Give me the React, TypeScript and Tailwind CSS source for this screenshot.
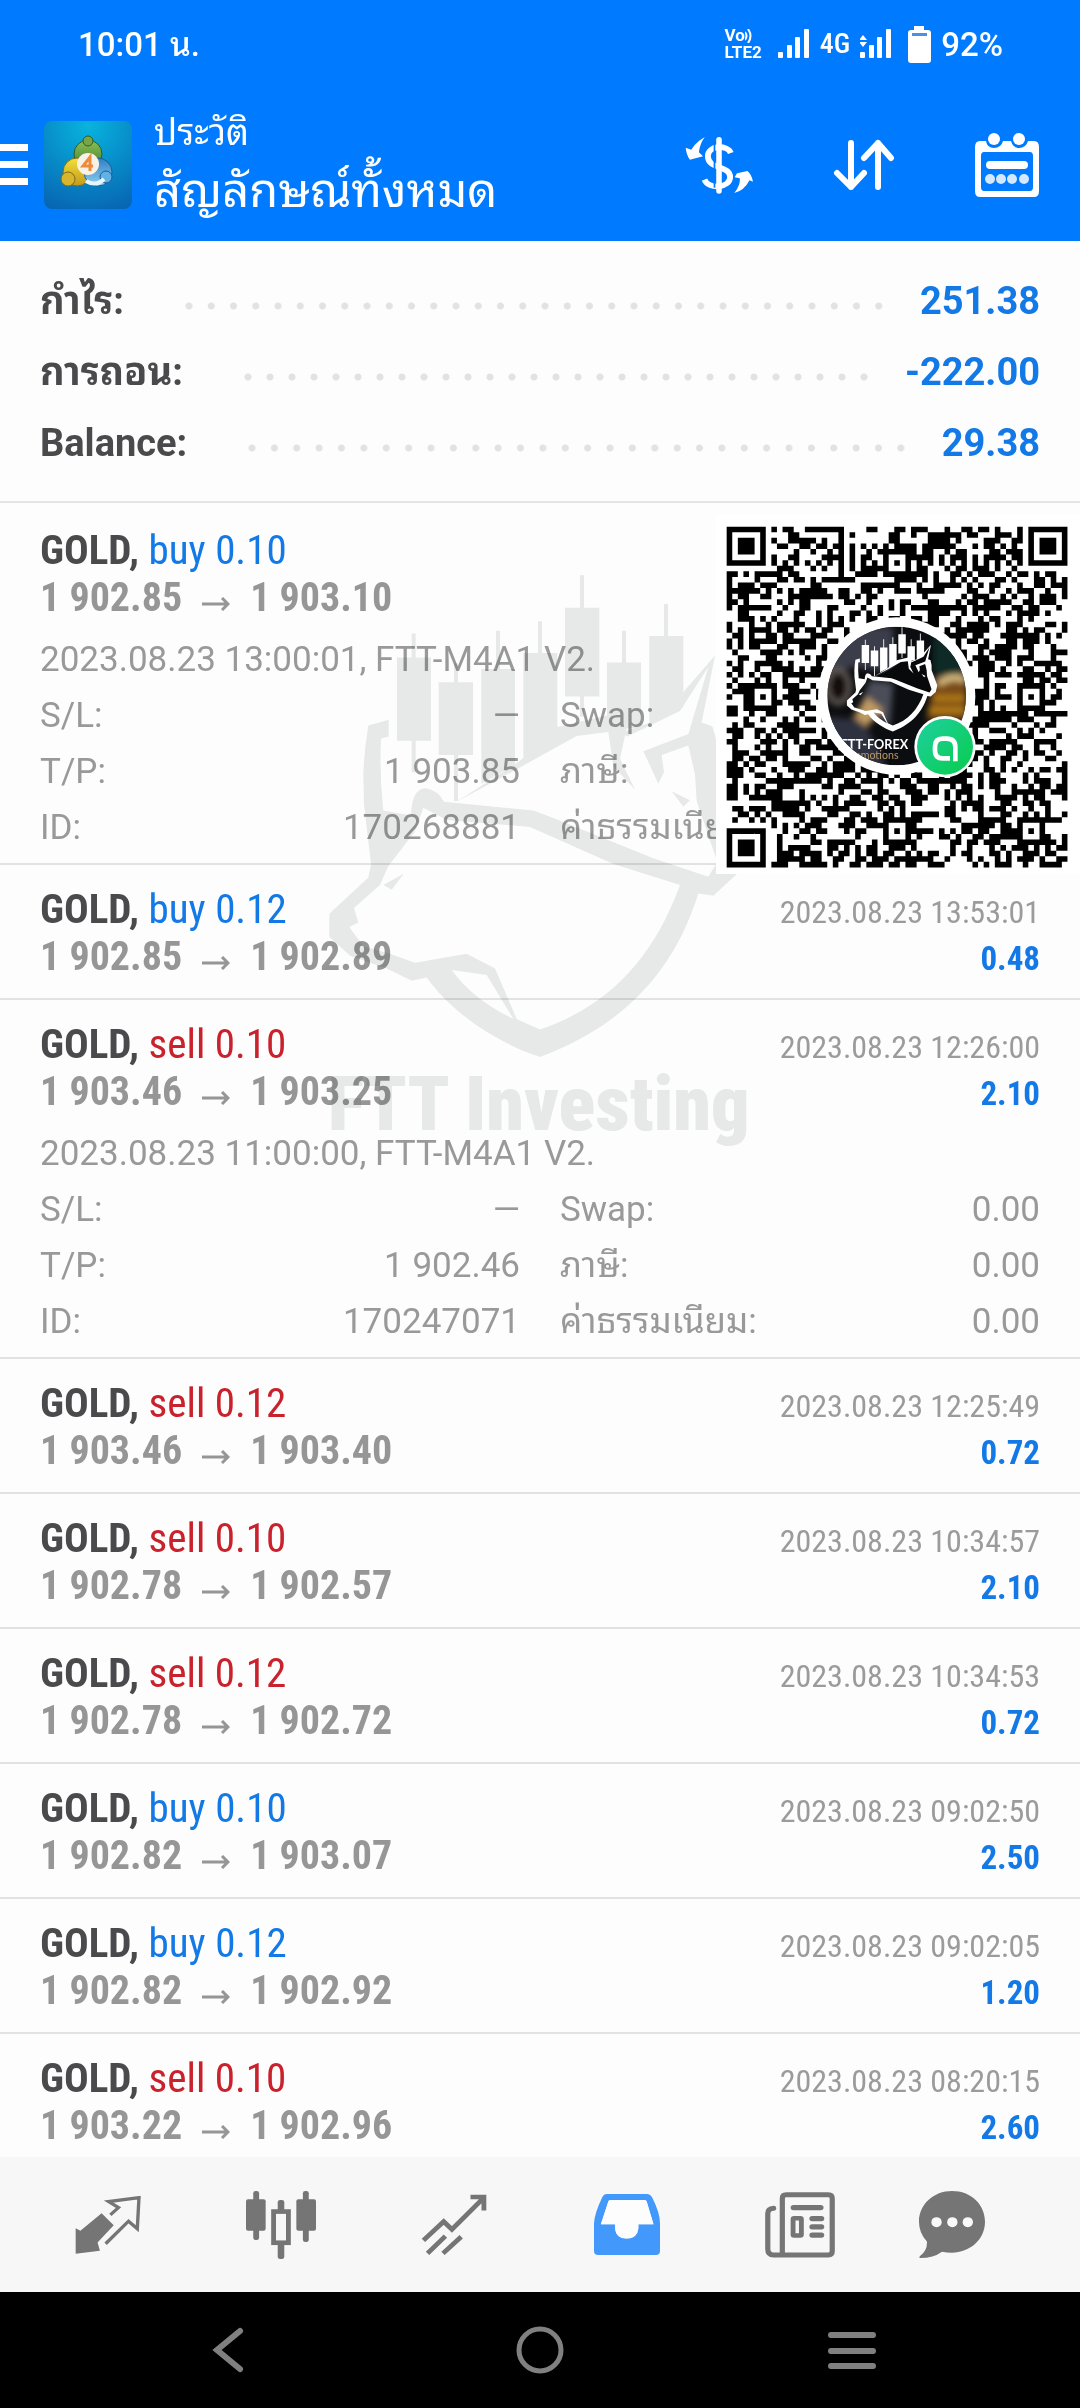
import React from 'react';

type Deal = {
  side: 'buy' | 'sell';
  volume: string;
  open: string;
  close: string;
  closedAt: string;
  profit: string;
  details?: {
    comment: string;
    takeProfit: string;
    id: string;
  };
};

const SUMMARY = [
  { label: 'กำไร:', value: '251.38' },
  { label: 'การถอน:', value: '-222.00' },
  { label: 'Balance:', value: '29.38' },
];

const DEALS: Deal[] = [
  {
    side: 'buy',
    volume: '0.10',
    open: '1 902.85',
    close: '1 903.10',
    closedAt: '',
    profit: '',
    details: { comment: '2023.08.23 13:00:01, FTT-M4A1 V2.', takeProfit: '1 903.85', id: '170268881' },
  },
  { side: 'buy', volume: '0.12', open: '1 902.85', close: '1 902.89', closedAt: '2023.08.23 13:53:01', profit: '0.48' },
  {
    side: 'sell',
    volume: '0.10',
    open: '1 903.46',
    close: '1 903.25',
    closedAt: '2023.08.23 12:26:00',
    profit: '2.10',
    details: { comment: '2023.08.23 11:00:00, FTT-M4A1 V2.', takeProfit: '1 902.46', id: '170247071' },
  },
  { side: 'sell', volume: '0.12', open: '1 903.46', close: '1 903.40', closedAt: '2023.08.23 12:25:49', profit: '0.72' },
  { side: 'sell', volume: '0.10', open: '1 902.78', close: '1 902.57', closedAt: '2023.08.23 10:34:57', profit: '2.10' },
  { side: 'sell', volume: '0.12', open: '1 902.78', close: '1 902.72', closedAt: '2023.08.23 10:34:53', profit: '0.72' },
  { side: 'buy', volume: '0.10', open: '1 902.82', close: '1 903.07', closedAt: '2023.08.23 09:02:50', profit: '2.50' },
  { side: 'buy', volume: '0.12', open: '1 902.82', close: '1 902.92', closedAt: '2023.08.23 09:02:05', profit: '1.20' },
  { side: 'sell', volume: '0.10', open: '1 903.22', close: '1 902.96', closedAt: '2023.08.23 08:20:15', profit: '2.60' },
];

function SignalBars({ withData = false }: { withData?: boolean }) {
  return (
    <svg className="h-[30px] w-8" viewBox="0 0 32 30" fill="currentColor">
      <rect x="0" y="23" width="5" height="6" rx="1" />
      <rect x="9" y="16" width="5" height="13" rx="1" />
      <rect x="17" y="8" width="5" height="21" rx="1" />
      <rect x="26" y="0" width="5" height="29" rx="1" />
      {withData ? <path d="M3 6l4 5H-1zM3 18l4-5H-1z" /> : null}
    </svg>
  );
}

function StatusBar() {
  return (
    <div className="flex h-[88px] items-center justify-between pr-[77px] pl-[78px] text-[33px] leading-none font-medium">
      <span>10:01 น.</span>
      <div className="flex items-center">
        <div className="mr-4 flex flex-col text-[17px] leading-[17px] font-bold">
          <span className="flex items-center">
            Vo
            <svg className="h-[14px] w-2" viewBox="0 0 8 14" fill="none" stroke="currentColor" strokeWidth="2">
              <path d="M0 3q3 4 0 8M3 0q5 7 0 14" />
            </svg>
          </span>
          <span>LTE2</span>
        </div>
        <SignalBars />
        <span className="mx-[10px] font-['Roboto_Condensed','Liberation_Sans_Narrow',sans-serif] text-[28px]">4G</span>
        <SignalBars withData />
        <svg className="mr-[10px] ml-4 h-[37px] w-[23px]" viewBox="0 0 23 37">
          <path d="M6 0h10v4H6zM3 4h17q3 0 3 3v27q0 3-3 3H3q-3 0-3-3V7q0-3 3-3z" fill="#fff" />
          <rect x="4" y="7" width="15" height="3" fill="#4a8fe8" />
        </svg>
        <span>92%</span>
      </div>
    </div>
  );
}

function AppLogo() {
  return (
    <svg className="ml-4 h-[88px] w-[88px]" viewBox="0 0 88 88">
      <defs>
        <radialGradient id="tile" cx="50%" cy="5%" r="100%">
          <stop offset="0" stopColor="#08b4de" />
          <stop offset="1" stopColor="#0767b4" />
        </radialGradient>
        <linearGradient id="green" x1="0" y1="0" x2="0" y2="1">
          <stop offset="0" stopColor="#8fbf52" />
          <stop offset="1" stopColor="#3f7f35" />
        </linearGradient>
        <linearGradient id="gold" x1="0" y1="0" x2="0" y2="1">
          <stop offset="0" stopColor="#f2e03a" />
          <stop offset="1" stopColor="#c39a1c" />
        </linearGradient>
        <linearGradient id="sky" x1="0" y1="0" x2="0" y2="1">
          <stop offset="0" stopColor="#2f7fc4" />
          <stop offset="1" stopColor="#8fd0f0" />
        </linearGradient>
      </defs>
      <rect width="88" height="88" rx="8" fill="url(#tile)" />
      <circle cx="44" cy="33" r="14" fill="url(#green)" stroke="#2c5d2e" />
      <circle cx="44" cy="20" r="5" fill="#7aa545" stroke="#2c5d2e" />
      <circle cx="33" cy="51" r="14" fill="url(#gold)" stroke="#7d6a18" />
      <circle cx="24" cy="58" r="7" fill="#d8b52c" stroke="#7d6a18" />
      <circle cx="54" cy="51" r="14" fill="url(#sky)" stroke="#1c5c94" />
      <circle cx="62" cy="56" r="6" fill="#5fb2e4" stroke="#1c5c94" />
      <path d="M42 60q10 6 18-2" stroke="#e6f6ff" strokeWidth="4" fill="none" />
      <circle cx="44" cy="43" r="11" fill="#f8f1e6" />
      <path d="M46 50V36l-7 9h10" stroke="#ee8a3c" strokeWidth="3" fill="none" />
    </svg>
  );
}

function Toolbar() {
  return (
    <div className="flex h-[153px] items-center pr-[41px]">
      <button type="button" aria-label="Menu" className="flex flex-col gap-[10px]">
        <span className="h-[7px] w-7 bg-white" />
        <span className="h-[7px] w-7 bg-white" />
        <span className="h-[7px] w-7 bg-white" />
      </button>
      <AppLogo />
      <div className="ml-[22px] flex-1">
        <p className="text-[36px] leading-[52px]">ประวัติ</p>
        <h1 className="text-[47px] leading-[64px]">สัญลักษณ์ทั้งหมด</h1>
      </div>
      <div className="flex items-center gap-20">
        <button type="button" aria-label="Deposit and withdraw">
          <svg className="h-[58px] w-[68px]" viewBox="430 405 196 174" preserveAspectRatio="none">
            <path
              d="M562 456C552 430 496 432 496 466C496 506 560 492 560 528C560 560 500 568 486 536"
              fill="none"
              stroke="#fff"
              strokeWidth="17"
            />
            <path d="M515 425V560" stroke="#007aff" strokeWidth="5" />
            <path d="M528 416V570" stroke="#fff" strokeWidth="16" strokeLinecap="round" />
            <path d="M487 408L470 420Q455 433 448 446L432 440Q434 462 444 476L482 466L470 454Q472 430 487 408Z" fill="#fff" />
            <path d="M572 576Q600 570 616 538L626 542Q622 520 610 510L580 517L573 529L588 532Q590 552 572 576Z" fill="#fff" />
          </svg>
        </button>
        <button type="button" aria-label="Sort">
          <svg
            className="h-[52px] w-[62px]"
            viewBox="0 0 62 52"
            fill="none"
            stroke="#fff"
            strokeWidth="6"
            strokeLinecap="round"
            strokeLinejoin="round"
          >
            <path d="M18 4V48M4 34L18 48L31 34M45 48V4M31 19L45 4L58 19" />
          </svg>
        </button>
        <button type="button" aria-label="Period">
          <svg className="h-16 w-16" viewBox="0 0 64 64">
            <path
              fillRule="evenodd"
              fill="#fff"
              d="M5 8H11Q12 15 19 15Q26 15 28 8H36Q38 15 44 15Q51 15 53 8H59Q64 8 64 14V58Q64 64 59 64H5Q0 64 0 58V14Q0 8 5 8ZM9 19Q6 19 6 23V54Q6 58 9 58H55Q58 58 58 54V23Q58 19 55 19Z"
            />
            <circle cx="19" cy="6" r="6" fill="#fff" />
            <circle cx="44" cy="6" r="6" fill="#fff" />
            <rect x="11" y="28" width="42" height="8" rx="4" fill="#fff" />
            <g fill="#d4e9ff">
              <circle cx="15" cy="46" r="5" />
              <circle cx="26" cy="46" r="5" />
              <circle cx="37" cy="46" r="5" />
              <circle cx="49" cy="46" r="5" />
            </g>
          </svg>
        </button>
      </div>
    </div>
  );
}

function Summary() {
  return (
    <dl className="border-b-2 border-[#e4e4e4] px-10 pt-[25px] pb-[22px] text-[38px] leading-[71px] font-bold">
      {SUMMARY.map((item) => (
        <div key={item.label} className="flex items-center">
          <dt className="text-[#4a4a4c]">{item.label}</dt>
          <dd className="contents">
            <span className="mt-2 mr-[30px] ml-[54px] h-2 flex-1 bg-[radial-gradient(circle,#e2e2e2_3px,transparent_4px)] bg-[length:22px_8px] bg-repeat-space" />
            <span className="text-[#1279e6]">{item.value}</span>
          </dd>
        </div>
      ))}
    </dl>
  );
}

function Detail({ label, value }: { label: string; value: string }) {
  return (
    <div className="flex h-14 justify-between whitespace-nowrap">
      <dt>{label}</dt>
      <dd>{value}</dd>
    </div>
  );
}

function DealRow({ deal }: { deal: Deal }) {
  return (
    <li className={`border-b-2 border-[#e2e2e2] px-10 pt-5 first:pt-[23px] ${deal.details ? 'pb-[7px]' : 'pb-[17px]'}`}>
      <div className="font-['Roboto_Condensed','Liberation_Sans_Narrow',sans-serif] leading-[48px]">
        <div className="flex h-12 items-baseline justify-between">
          <span className="text-[41px]">
            <span className="font-bold text-[#4a4a4c]">GOLD, </span>
            <span className={deal.side === 'buy' ? 'text-[#1279e6]' : 'text-[#c9222c]'}>
              {deal.side} {deal.volume}
            </span>
          </span>
          <time className="text-[32px] text-[#9b9b9b]">{deal.closedAt}</time>
        </div>
        <div className="flex h-12 items-baseline justify-between font-bold">
          <span className="text-[40px] text-[#969696]">
            {deal.open}
            <svg className="mx-5 inline h-[14px] w-7 align-baseline" viewBox="0 0 28 14" fill="none" stroke="currentColor" strokeWidth="3">
              <path d="M0 7H26M20 1L26 7L20 13" />
            </svg>
            {deal.close}
          </span>
          <span className="text-[33px] text-[#1279e6]">{deal.profit}</span>
        </div>
      </div>
      {deal.details ? (
        <div className="mt-[10px] text-[35px] leading-[56px] text-[#999]">
          <p>{deal.details.comment}</p>
          <dl className="grid grid-flow-col grid-cols-2 grid-rows-3 gap-x-10">
            <Detail label="S/L:" value="—" />
            <Detail label="T/P:" value={deal.details.takeProfit} />
            <Detail label="ID:" value={deal.details.id} />
            <Detail label="Swap:" value="0.00" />
            <Detail label="ภาษี:" value="0.00" />
            <Detail label="ค่าธรรมเนียม:" value="0.00" />
          </dl>
        </div>
      ) : null}
    </li>
  );
}

// Bull and bear heads under a row of candles, shared by the watermark and the QR avatar
function BullBearMark() {
  return (
    <>
      <path d="M291 255H393V473H291ZM335 192H347V255H335ZM335 473H347V555H335ZM416 320H519V510H416ZM462 270H474V320H462ZM462 510H474V630H462Z" />
      <path d="M544 285H645V535L544 585ZM588 185H600V285H588ZM670 243H772V480L670 527ZM714 160H726V243H714Z" />
      <path d="M795 125H898V357H795ZM840 40H852V125H840ZM840 357H852V410H840ZM921 268H1023V440H921ZM966 185H978V268H966ZM1048 199H1150V385L1048 430ZM1092 115H1104V199H1092Z" />
      <path d="M470 632L660 525L772 437L930 405L1040 440L980 440L960 520L1005 600L940 540L925 450L830 460L665 540Z" />
      <path d="M970 450L1050 425L1150 345L1245 250L1205 425L1237 435Q1262 500 1254 560L1332 745L1310 822L1240 878L1195 872C1110 1110 930 1230 720 1300C600 1265 460 1190 380 1092L335 1100L260 1068L150 1035L88 985V925L205 830L213 795L192 640L190 560Q192 500 205 433L266 418V462L243 467Q238 560 250 655L333 668Q335 600 375 597Q415 602 432 632L700 655L760 675L1060 780L1225 828L1252 790L1190 630L1185 560L1165 485L1085 510L1092 555L1075 585L1030 500L1165 455L1225 280L1140 395L980 462ZM370 648L345 710L265 800L240 850L162 910L175 948L148 960L190 1010L270 1030L345 1053L500 1030L585 1068L650 1200L720 1228C930 1165 1060 1040 1140 850L940 795L690 698L440 680ZM455 1072Q520 1150 640 1200L560 1085Z" fillRule="evenodd" />
      <path d="M250 850L312 820L275 862ZM1115 605L1170 628L1150 645ZM1165 485L1200 475L1203 530Z" />
    </>
  );
}

function Watermark() {
  return (
    <div className="pointer-events-none absolute top-[319px] left-[300px] w-[480px] text-[#e9ebeb] mix-blend-multiply">
      <svg className="h-[504px] w-[480px]" viewBox="0 0 1440 1318" preserveAspectRatio="none" fill="currentColor">
        <BullBearMark />
      </svg>
      <p className="ml-7 font-['Roboto_Condensed','Liberation_Sans_Narrow',sans-serif] text-[76px] leading-[80px] font-black whitespace-nowrap">
        FTT Investing
      </p>
    </div>
  );
}

const QR_SIZE = 61;
const FINDERS = [
  [0, 0],
  [QR_SIZE - 7, 0],
  [0, QR_SIZE - 7],
];
const ALIGNMENTS = [
  [30, 6],
  [6, 30],
  [54, 30],
  [30, 54],
  [54, 54],
];

function buildQrPath() {
  let seed = 20230823;
  let path = '';
  for (let y = 0; y < QR_SIZE; y += 1) {
    for (let x = 0; x < QR_SIZE; x += 1) {
      seed = (seed * 48271) % 2147483647;
      let dark = seed / 2147483647 < 0.52;
      if (x === 6) dark = y % 2 === 0;
      if (y === 6) dark = x % 2 === 0;
      ALIGNMENTS.forEach(([cx, cy]) => {
        const d = Math.max(Math.abs(x - cx), Math.abs(y - cy));
        if (d <= 2) dark = d !== 1;
      });
      FINDERS.forEach(([fx, fy]) => {
        const d = Math.max(Math.abs(x - fx - 3), Math.abs(y - fy - 3));
        if (d <= 4) dark = d !== 2 && d !== 4;
      });
      if (dark) path += `M${x} ${y}h1v1h-1z`;
    }
  }
  return path;
}

const QR_PATH = buildQrPath();

function QrCard() {
  return (
    <svg
      className="absolute top-[273px] right-0 h-[360px] w-[364px]"
      viewBox="-12 -18 1092 1080"
      role="img"
      aria-label="FTT-FOREX QR"
    >
      <defs>
        <clipPath id="avatar">
          <circle cx="530" cy="528" r="208" />
        </clipPath>
        <linearGradient id="badge" x1="0" y1="0" x2="1" y2="1">
          <stop offset="0" stopColor="#1fd0a0" />
          <stop offset="1" stopColor="#08cc4c" />
        </linearGradient>
        <filter id="soft">
          <feGaussianBlur stdDeviation="9" />
        </filter>
      </defs>
      <rect x="-12" y="-18" width="1092" height="1080" fill="#fff" />
      <path d={QR_PATH} transform="translate(20 20) scale(16.76)" />
      <circle cx="530" cy="528" r="236" fill="#fff" />
      <g clipPath="url(#avatar)">
        <rect x="322" y="320" width="416" height="416" fill="#0b0d10" />
        <g filter="url(#soft)">
          <path d="M322 320H520V460L400 440L322 470Z" fill="#3a3d4c" />
          <path d="M450 480L520 490L510 620L420 560Z" fill="#4b4d58" />
          <path d="M322 590L430 600L500 740H322Z" fill="#2d3040" />
          <ellipse cx="355" cy="500" rx="34" ry="50" fill="#14110f" stroke="#6a625c" strokeWidth="12" />
          <path d="M400 590L440 530L490 570L440 620Z" fill="#c09a62" />
          <path d="M640 480Q740 440 740 500V600H620Z" fill="#7a4d12" />
          <path d="M655 490Q700 460 738 480" stroke="#e6c98a" strokeWidth="18" fill="none" />
          <path d="M625 570H735M640 535H735" stroke="#c98a1e" strokeWidth="12" />
          <path d="M640 330L740 420V460L640 470Z" fill="#0c2a26" />
        </g>
        <path d="M470 472L560 420L630 385L640 520L600 520Z" fill="#08090b" />
        <g transform="translate(361.6 312) scale(.218 .248)" fill="#fff">
          <BullBearMark />
        </g>
        <text x="362" y="686" fill="#fff" fontSize="38" fontWeight="700" fontFamily="Lato, sans-serif">
          FTT-FOREX
        </text>
        <text x="405" y="718" fill="#b99a6a" fontSize="32" fontFamily="Lato, sans-serif">
          emotions
        </text>
      </g>
      <circle cx="675" cy="680" r="92" fill="#fff" />
      <circle cx="675" cy="680" r="84" fill="url(#badge)" />
      <path
        d="M706 724V682Q706 656 680 656H668Q645 656 645 680V692Q645 715 668 715H690"
        fill="none"
        stroke="#fff"
        strokeWidth="14"
      />
    </svg>
  );
}

const TABS = [
  {
    label: 'Quotes',
    icon: (
      <svg className="h-[58px] w-[66px]" viewBox="218 465 196 175" preserveAspectRatio="none">
        <path d="M297 517L333 553L285 605L292 630L220 639V562L234 570Z" fill="#757575" />
        <path d="M323 522L347 500L318 482L408 470L403 564L377 541L309 609" fill="none" stroke="#757575" strokeWidth="10" />
      </svg>
    ),
  },
  {
    label: 'Charts',
    icon: (
      <svg className="h-[68px] w-[70px]" viewBox="715 450 203 205" preserveAspectRatio="none" fill="#757575">
        <rect x="715" y="475" width="57" height="95" rx="6" />
        <rect x="736" y="450" width="17" height="148" rx="7" />
        <rect x="861" y="475" width="57" height="95" rx="6" />
        <rect x="880" y="450" width="17" height="154" rx="7" />
        <rect x="807" y="477" width="19" height="178" rx="7" />
        <rect x="795" y="512" width="43" height="94" fill="#f7f7f7" stroke="#757575" strokeWidth="14" />
      </svg>
    ),
  },
  {
    label: 'Trade',
    icon: (
      <svg
        className="h-[61px] w-[66px]"
        viewBox="1223 457 192 184"
        preserveAspectRatio="none"
        fill="none"
        stroke="#757575"
        strokeWidth="14"
      >
        <path d="M1230 597L1289 540L1313 564L1406 468M1367 466H1406V507M1242 636L1294 584M1287 636L1340 586" />
      </svg>
    ),
  },
  {
    label: 'History',
    icon: (
      <svg className="h-[61px] w-[66px]" viewBox="158 458 192 182" preserveAspectRatio="none">
        <path
          fillRule="evenodd"
          fill="#4299fb"
          d="M196 458H312Q322 458 328 470Q350 515 350 545V628Q350 640 338 640H170Q158 640 158 628V545Q160 515 182 468Q186 458 196 458ZM206 476Q202 476 200 480L178 548H219V560Q222 591 253 591Q284 591 287 560V548H331L311 480Q309 476 304 476Z"
        />
        <path d="M206 476H304Q309 476 311 480L331 548H287V560Q284 591 253 591Q222 591 219 560V548H178L200 480Q202 476 206 476Z" fill="#fdfdfd" />
      </svg>
    ),
  },
  {
    label: 'News',
    icon: (
      <svg className="h-[66px] w-[70px]" viewBox="657 450 202 199" preserveAspectRatio="none" fill="none" stroke="#757575">
        <path d="M707 640V469Q707 458 718 458H840Q851 458 851 469V629Q851 640 840 640H682Q665 640 665 622V515Q665 500 682 499" strokeWidth="15" strokeLinecap="round" />
        <path d="M739 497H818M793 530H820M793 555H820M793 580H820" strokeWidth="16" strokeLinecap="round" />
        <rect x="738" y="529" width="24" height="52" rx="3" strokeWidth="14" />
      </svg>
    ),
  },
  {
    label: 'Chat',
    icon: (
      <svg className="h-[67px] w-[66px]" viewBox="1103 450 192 200" preserveAspectRatio="none">
        <path
          d="M1199 450C1255 450 1295 490 1295 542C1295 596 1250 634 1199 634Q1183 634 1170 631Q1145 650 1106 650Q1102 648 1106 644Q1128 628 1126 601Q1103 576 1103 542C1103 490 1145 450 1199 450Z"
          fill="#757575"
        />
        <g fill="#f9f9f9">
          <circle cx="1154" cy="543" r="15" />
          <circle cx="1200" cy="543" r="15" />
          <circle cx="1245" cy="543" r="15" />
        </g>
      </svg>
    ),
  },
];

function TabBar() {
  return (
    <nav className="grid h-[135px] shrink-0 grid-cols-[repeat(5,173fr)_131fr] bg-[#f7f7f7] pr-[63px] pl-[21px]">
      {TABS.map((tab) => (
        <button key={tab.label} type="button" aria-label={tab.label} className="flex items-center justify-center">
          {tab.icon}
        </button>
      ))}
    </nav>
  );
}

function SystemNav() {
  return (
    <nav className="grid h-[116px] shrink-0 grid-cols-3 justify-items-center bg-black px-[72px] text-[#808080]">
      <button type="button" aria-label="Back">
        <svg className="h-12 w-8" viewBox="0 0 32 48" fill="none" stroke="currentColor" strokeWidth="6" strokeLinecap="round">
          <path d="M28 5L5 24L28 43" />
        </svg>
      </button>
      <button type="button" aria-label="Home">
        <svg className="h-12 w-12" viewBox="0 0 48 48" fill="none" stroke="currentColor" strokeWidth="5">
          <circle cx="24" cy="24" r="21" />
        </svg>
      </button>
      <button type="button" aria-label="Recent apps">
        <svg className="h-12 w-12" viewBox="0 0 48 48" fill="none" stroke="currentColor" strokeWidth="6" strokeLinecap="round">
          <path d="M3 9H45M3 25H45M3 40H45" />
        </svg>
      </button>
    </nav>
  );
}

export default function App() {
  return (
    <div className="flex h-screen flex-col bg-[#fdfdfd] font-['Roboto','Noto_Sans_Thai_Looped','Noto_Looped_Thai','Loma','Garuda','Waree',sans-serif]">
      <header className="shrink-0 bg-[#007aff] text-white">
        <StatusBar />
        <Toolbar />
      </header>
      <main className="relative min-h-0 flex-1 overflow-hidden">
        <Summary />
        <ul>
          {DEALS.map((deal) => (
            <DealRow key={`${deal.side}-${deal.closedAt}-${deal.open}`} deal={deal} />
          ))}
        </ul>
        <Watermark />
        <QrCard />
      </main>
      <TabBar />
      <SystemNav />
    </div>
  );
}
